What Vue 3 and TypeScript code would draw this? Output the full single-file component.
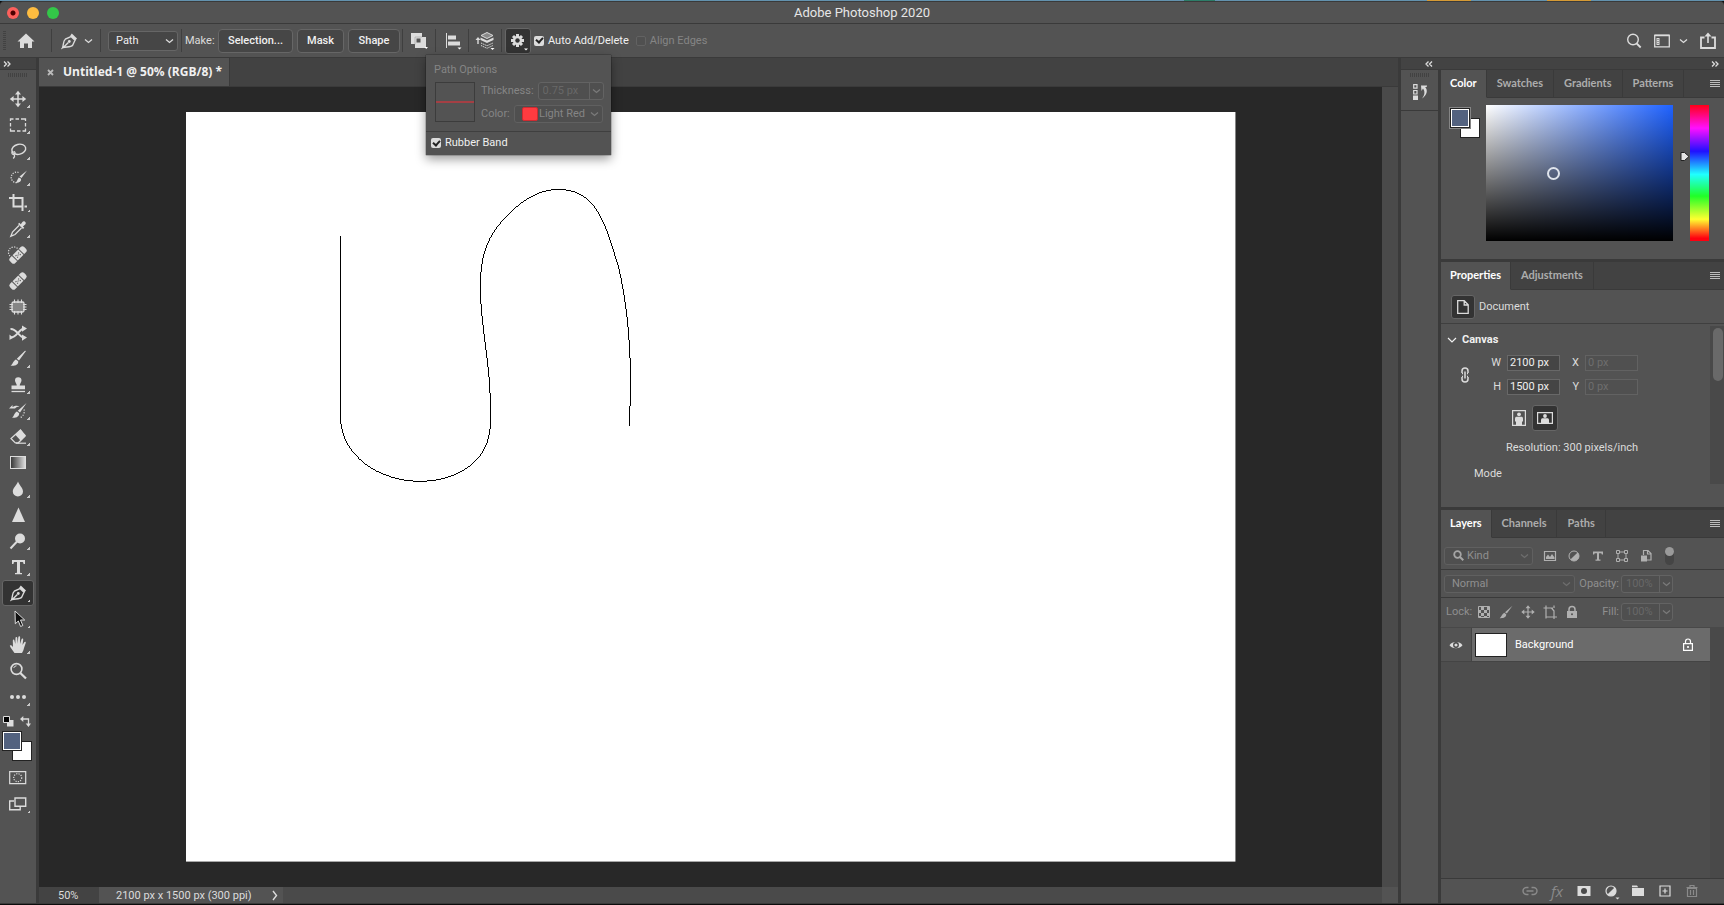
<script setup lang="ts">
import { ref } from 'vue'

interface Tool {
  name: string
  icon: string
  more: boolean
}

const tools: Tool[] = [
  { name: 'Move', more: true, icon: '<path d="M9 2v14M2 9h14" stroke="currentColor" stroke-width="1.5"/><path d="M9 .8 12 4.6H6zM9 17.2 12 13.400H6zM.8 9 4.600 6v6zM17.200 9 13.400 6v6z" fill="currentColor"/>' },
  { name: 'Marquee', more: true, icon: '<path d="M1.500 5V3h3M6.500 3h3.500M12 3h4.500v2M16.500 7v3.500M16.500 12.500V15h-3M11.500 15H8M6 15H1.500v-2.500M1.500 10.500V7" fill="none" stroke="currentColor" stroke-width="1.300"/>' },
  { name: 'Lasso', more: true, icon: '<ellipse cx="9.800" cy="7.300" rx="7" ry="5" transform="rotate(-14 9.800 7.300)" fill="none" stroke="currentColor" stroke-width="1.400"/><path d="M3.500 9.500c-1.500 1.500-.2 3.300 1.500 2.700 2-.6 1-2.700-.5-2.500M5 12.500c1.200 1.500.3 3-.8 4" fill="none" stroke="currentColor" stroke-width="1.200"/>' },
  { name: 'Quick Selection', more: true, icon: '<path d="M9.500 4.500A5.300 5.300 0 1 0 9 14.500" fill="none" stroke="currentColor" stroke-width="1.300" stroke-dasharray="1.200 1.300"/><path d="M18 2.500 12.500 10l-2-1.500zM12 10.800c.5 2.500-1.500 4.200-5.500 4 1.600-1 1.700-3 3.300-5.200z" fill="currentColor"/>' },
  { name: 'Crop', more: true, icon: '<path d="M4.500 0v12.500H14M0 4h13.500V17M15.500 12.500H18" fill="none" stroke="currentColor" stroke-width="2"/>' },
  { name: 'Eyedropper', more: true, icon: '<path d="M10 5.500 3.500 12l-1.700 4.200L6 14.500 12.500 8" fill="none" stroke="currentColor" stroke-width="1.300"/><path d="m9 4 1.300-1.200 1.500 1.400 1.600-2.300c1.700-1.800 4.600.8 2.800 2.700l-2.300 1.800 1.400 1.300L14 9z" fill="currentColor"/>' },
  { name: 'Spot Healing', more: false, icon: '<path d="M1 10a5 5 0 0 1 7.500-7.500" fill="none" stroke="currentColor" stroke-width="1.200" stroke-dasharray="1.200 1.300"/><g transform="rotate(-45 9 9)"><rect x="-1" y="5.300" width="20" height="7.400" rx="2.500" fill="currentColor"/><path d="M4.500 5v8M13.500 5v8" stroke="#535353" stroke-width="1"/><path d="M6.500 7.500h1.300v1H6.500zM10.200 7.500h1.300v1h-1.300zM8.400 8.600h1.200v1H8.400zM6.500 9.800h1.300v1H6.500zM10.200 9.800h1.300v1h-1.300z" fill="#535353"/></g>' },
  { name: 'Healing Brush', more: false, icon: '<g transform="rotate(-45 9 9)"><rect x="-1" y="5.300" width="20" height="7.400" rx="2.500" fill="currentColor"/><path d="M4.500 5v8M13.500 5v8" stroke="#535353" stroke-width="1"/><path d="M6.500 7.500h1.300v1H6.500zM10.200 7.500h1.300v1h-1.300zM8.400 8.600h1.200v1H8.400zM6.500 9.800h1.300v1H6.500zM10.200 9.800h1.300v1h-1.300z" fill="#535353"/></g>' },
  { name: 'Patch', more: false, icon: '<rect x="3" y="4" width="12" height="10" rx="1.500" fill="#858585" stroke="currentColor" stroke-width="1.300"/><path d="M5.500 1.500V5M9 1.500V5M12.500 1.500V5M5.500 13v3.500M9 13v3.500M12.500 13v3.500M.5 6.500H4M.5 9H4M.5 11.500H4M14 6.500h3.500M14 9h3.500M14 11.500h3.500" stroke="currentColor" stroke-width="1.100"/>' },
  { name: 'Content-Aware Move', more: false, icon: '<path d="M1.500 5C8 4.500 10 13.500 15 13.500M1.500 13.500C8 13.500 10 5 15 4.500" fill="none" stroke="currentColor" stroke-width="1.900"/><path d="m13 1.500 5 3-5 3.200zM13 10.500l5 3-5 3.200zM.5 10.500 4 13.800.5 16z" fill="currentColor"/>' },
  { name: 'Brush', more: true, icon: '<path d="m17 1-7 9.500-2.200-1.700L16 .8zM7 9.500l2.200 1.700c.5 3-2.500 5-7.700 4.600 2-1 2.500-5 5.500-6.300z" fill="currentColor"/>' },
  { name: 'Clone Stamp', more: true, icon: '<path d="M7.800 9.500c0-2-1.800-3-1.800-5a3.200 3.200 0 0 1 6.500 0c0 2-1.800 3-1.800 5H16v3.700H2.500V9.500z" fill="currentColor"/><path d="M2.500 15.500H16" stroke="currentColor" stroke-width="1.300"/>' },
  { name: 'History Brush', more: true, icon: '<path d="m17.500 1-6.500 9.500-2.200-1.700zM8 9.500l2.200 1.700c0 3-2.500 5-7.200 4.600 2-1 2-5 5-6.300z" fill="currentColor"/><path d="M0 6.500 3.500 3v2c3-1.500 5-1.500 7-.5-2 0-3.500.8-4.500 2z" fill="currentColor"/><path d="M15 7.500c1 3-.5 6.500-4 8.500" fill="none" stroke="currentColor" stroke-width="1.200" stroke-dasharray="1.200 1.500"/>' },
  { name: 'Eraser', more: true, icon: '<path d="m2 10.500 4.300 4.300h3L16 8.200 11.500 2z" fill="none" stroke="currentColor" stroke-width="1.200"/><path d="M11.500 1.500 17 7.500l-5.500 5-5.200-5.700z" fill="currentColor"/><path d="M7 15.200h10" stroke="currentColor" stroke-width="1.200"/>' },
  { name: 'Gradient', more: false, icon: '<defs><linearGradient id="tool-ramp"><stop offset="0" stop-color="#333"/><stop offset="1" stop-color="#e0e0e0"/></linearGradient></defs><rect x="1.500" y="2.500" width="15" height="12" fill="url(#tool-ramp)" stroke="currentColor"/>' },
  { name: 'Blur', more: true, icon: '<path d="M9 1.500c1.500 4 5 6.500 5 10a5 5 0 0 1-10.200 0c0-3.500 3.700-6 5.200-10z" fill="currentColor"/>' },
  { name: 'Sharpen', more: false, icon: '<path d="M9.500 1.500 16 16H3z" fill="currentColor"/>' },
  { name: 'Dodge', more: true, icon: '<circle cx="11" cy="6.500" r="5" fill="currentColor"/><path d="m8 9.500-6.500 7" stroke="currentColor" stroke-width="2"/>' },
  { name: 'Type', more: true, icon: '<path d="M3 2h13v4h-1.500c0-1.500-.5-2-1.500-2h-2v10.200c0 .8.800.8 2 .8v1.200H6V15c1.200 0 2 0 2-.8V4H6C5 4 4.500 4.500 4.500 6H3z" fill="currentColor"/>' },
  { name: 'Pen', more: true, icon: '<path d="m3.200 15.500-.7.400c1.200-3 .5-7 2.800-8.700L11 4.500l4 3.700-2.300 5c-1.700 2-5.700 1.500-9.500 2.300l5.200-5" fill="none" stroke="currentColor" stroke-width="1.400"/><circle cx="9.300" cy="9.500" r="1.400" fill="currentColor"/><path d="m10.200 3.800 1.600-2.300 5.200 5-1.700 2z" fill="currentColor"/>' },
  { name: 'Path Selection', more: true, icon: '<path d="m6 1 .3 12.800 3-2.800 2.300 5.500 2.200-1L11.500 10h4.200z" fill="#111" stroke="currentColor" stroke-width="1"/>' },
  { name: 'Hand', more: true, icon: '<path d="M5.500 17C4 14.500 1.500 11.800.8 9.700c.8-1 2-.5 3.200 1.500L3.800 4.700c0-1.500 1.500-1.500 1.700 0L6.300 8l.2-6c0-1.500 1.700-1.500 1.800 0l.2 5.800L9.300 1.300c.1-1.400 1.800-1.300 1.800 0L11 8l1.500-4.700c.4-1.300 1.900-1 1.700.4L13.500 9l1.700-2.700c.8-1.100 2-.5 1.500.8L15 12c-.5 2-1 3.500-2 5z" fill="currentColor"/>' },
  { name: 'Zoom', more: false, icon: '<circle cx="7.500" cy="7" r="5.400" fill="none" stroke="currentColor" stroke-width="1.600"/><path d="m11.300 11 5.700 5.500" stroke="currentColor" stroke-width="2.300"/><path d="M4.700 6A3 3 0 0 1 7.500 3.800" fill="none" stroke="currentColor"/>' },
  { name: 'More Tools', more: true, icon: '<g fill="currentColor"><circle cx="3" cy="9" r="2"/><circle cx="9" cy="9" r="2"/><circle cx="15" cy="9" r="2"/></g>' },
]

const activeTool = ref('Pen')
const pathMode = ref('Path')
const autoAdd = ref(true)
const alignEdges = ref(false)
const rubberBand = ref(true)
const thickness = ref('0.75 px')
const pathColor = ref('Light Red')
const canvasW = ref('2100 px')
const canvasH = ref('1500 px')
const canvasX = ref('0 px')
const canvasY = ref('0 px')
const opacity = ref('100%')
const fill = ref('100%')

const colorTabs = ['Color', 'Swatches', 'Gradients', 'Patterns']
const propertyTabs = ['Properties', 'Adjustments']
const layerTabs = ['Layers', 'Channels', 'Paths']

const filters = [
  { name: 'Pixel layers', icon: '<path d="M1.500 2.500h11v9h-11z" fill="none" stroke="currentColor" stroke-width="1.200"/><path d="M3 10V8l2-2.500L7 8l2-3 2.500 3.500V10z" fill="currentColor"/>' },
  { name: 'Adjustment layers', icon: '<circle cx="7" cy="7" r="5" fill="none" stroke="currentColor"/><path d="M10.600 3.400A5 5 0 0 1 3.400 10.600z" fill="currentColor"/>' },
  { name: 'Type layers', icon: '<path d="M2 2.500h10v3h-1.200c0-1-.5-1.300-1.300-1.300H8v6.300h1.500v1.200h-5v-1.200H6V4.200H4.500c-.8 0-1.300.3-1.300 1.300H2z" fill="currentColor"/>' },
  { name: 'Shape layers', icon: '<path d="M3 3h8v8H3z" fill="none" stroke="currentColor"/><path d="M1.500 1.500h3v3h-3zM9.500 1.500h3v3h-3zM1.500 9.500h3v3h-3zM9.500 9.500h3v3h-3z" fill="#535353" stroke="currentColor"/>' },
  { name: 'Smart objects', icon: '<path d="M4.500 6V1.500H9L12 4.500V11H8M8.500 1.500V5H12" fill="none" stroke="currentColor" stroke-width="1.200"/><path d="M2 6.500h6v6H2z" fill="currentColor"/>' },
]

const locks = [
  { name: 'Lock transparent pixels', icon: '<path d="M1.500 1.500h11v11h-11z" fill="none" stroke="currentColor"/><path d="M4 2h3v3H4zM10 2h2v3h-2zM2 5h2v3H2zM7 5h3v3H7zM4 8h3v3H4zM10 8h2v3h-2zM2 11h2v1H2zM7 11h3v1H7z" fill="currentColor"/>' },
  { name: 'Lock image pixels', icon: '<path d="M13.500.8 7.800 8.500 6 7.200zM5.300 7.800l1.900 1.500c.3 2.500-2 4.200-6.500 3.900 1.800-1 2.100-4.300 4.600-5.400z" fill="currentColor"/>' },
  { name: 'Lock position', icon: '<path d="M7 2v10M2 7h10" stroke="currentColor" stroke-width="1.200"/><path d="M7 .3 9.500 3.300h-5zM7 13.700 9.500 10.700h-5zM.3 7 3.300 4.500v5zM13.700 7 10.700 4.500v5z" fill="currentColor"/>' },
  { name: 'Lock artboard nesting', icon: '<path d="M3 .5v13M.5 3h3M11 .5V3M3 3h7M3 12h11M11 5.500V14M8.500 3 11 6" fill="none" stroke="currentColor" stroke-width="1.200"/>' },
  { name: 'Lock all', icon: '<path d="M2 6h10v7H2z" fill="currentColor"/><path d="M4 6.500V4.500a3 3 0 0 1 6 0v2" fill="none" stroke="currentColor" stroke-width="1.500"/><circle cx="7" cy="9.300" r="1" fill="#535353"/>' },
]

const layerActions = [
  { name: 'Link layers', dim: true, icon: '<path d="M7.500 5.500H5.500a3.500 3.500 0 0 0 0 7h2M10.500 5.500h2a3.500 3.500 0 0 1 0 7h-2M5.500 9h7" fill="none" stroke="currentColor" stroke-width="1.400"/>' },
  { name: 'Layer style', dim: true, icon: '' },
  { name: 'Add mask', dim: false, icon: '<path d="M2.500 4h13v10h-13z" fill="currentColor"/><circle cx="9" cy="9" r="3" fill="#4a4a4a"/>' },
  { name: 'New adjustment layer', dim: false, icon: '<circle cx="9" cy="9" r="5" fill="none" stroke="currentColor" stroke-width="1.200"/><path d="M12.600 5.400A5 5 0 0 1 5.400 12.600z" fill="currentColor"/><path d="M13.500 15.500h4l-2 2z" fill="currentColor"/>' },
  { name: 'New group', dim: false, icon: '<path d="M3 3.500h5l1.200 1.700H3zM3 6h12v8H3z" fill="currentColor"/>' },
  { name: 'New layer', dim: false, icon: '<path d="M4 4h10v10H4zM9 6.500v5M6.500 9h5" fill="none" stroke="currentColor" stroke-width="1.200"/>' },
  { name: 'Delete layer', dim: true, icon: '<path d="M4.500 6.500h9v8h-9zM3.500 5.500h11M7 5V3.500h4V5M7.500 8v5M10.500 8v5" fill="none" stroke="currentColor" stroke-width="1.200"/>' },
]
</script>

<template>
  <div class="window">
    <div class="desktop"></div>
    <header class="titlebar">
      <div class="lights">
        <button class="light red" aria-label="Close"></button>
        <button class="light amber" aria-label="Minimise"></button>
        <button class="light green" aria-label="Zoom"></button>
      </div>
      <h1>Adobe Photoshop 2020</h1>
    </header>

    <div class="options">
      <span class="grip-v"></span>
      <button class="bare home" aria-label="Home">
        <svg width="18" height="18" viewBox="0 0 18 18"><path d="M9 1.500 17.500 9.500H15V16h-4v-4.500H7V16H3V9.500H.5z" fill="currentColor" /></svg>
      </button>
      <span class="sep"></span>
      <button class="bare pen" aria-label="Pen presets">
        <svg width="18" height="18" viewBox="0 0 18 18" v-html="tools[19].icon"></svg>
        <svg class="chev" width="9" height="6" viewBox="0 0 9 6"><path d="M1 1.500 4.500 4.500 8 1.500" /></svg>
      </button>
      <span class="sep"></span>
      <span class="drop mode">
        <select v-model="pathMode" aria-label="Tool mode"><option>Path</option></select>
        <svg class="chev" width="9" height="6" viewBox="0 0 9 6"><path d="M1 1.500 4.500 4.500 8 1.500" /></svg>
      </span>
      <span class="sep"></span>
      <span class="make">Make:</span>
      <div class="makes">
        <button class="push w1">Selection...</button>
        <button class="push w2">Mask</button>
        <button class="push w3">Shape</button>
      </div>
      <span class="sep"></span>
      <button class="bare op" aria-label="Path operations">
        <svg width="20" height="18" viewBox="0 0 20 18"><path d="M2 1h11v4h4v11H6v-4H2z" fill="currentColor" /><path d="M7.500 6.500h4v4h-4z" fill="#535353" /><path d="M6 12.500V5h7" fill="none" stroke="#a0a0a0" stroke-width=".6" /><path d="M15.500 15h3.500l-1.700 2z" fill="#fff" /></svg>
      </button>
      <span class="sep"></span>
      <button class="bare op" aria-label="Path alignment">
        <svg width="20" height="18" viewBox="0 0 20 18"><path d="M4.500 1v15" stroke="currentColor" /><path d="M6 3.500h8v4H6zM6 9.500h12v4H6z" fill="currentColor" /><path d="M15.500 15.500h4l-2 2z" fill="#fff" /></svg>
      </button>
      <span class="sep"></span>
      <button class="bare op" aria-label="Path arrangement">
        <svg width="20" height="18" viewBox="0 0 20 18"><path d="M3 12V7" stroke="currentColor" stroke-width="1.400" /><path d="M3 5 5.500 8H.5z" fill="currentColor" /><path d="m12 .5 6 3-6 3-6-3z" fill="#8a8a8a" stroke="currentColor" /><path d="m5.500 5.500 6.500 3 6.500-3v2.500L12 11 5.500 8z" fill="currentColor" /><path d="m6 11 6 2.800 6-2.800M6 13.500l6 2.800 6-2.800" fill="none" stroke="currentColor" stroke-dasharray="1.500 .8" /><path d="M15.500 16h4l-2 2z" fill="#fff" /></svg>
      </button>
      <span class="sep"></span>
      <div class="gear-wrap">
        <button class="gear" aria-label="Path options">
          <svg width="22" height="22" viewBox="0 0 22 22"><g stroke="currentColor" stroke-width="3"><path d="M10.500 4v13M4 10.500h13M6 6l9 9M15 6l-9 9" /></g><circle cx="10.500" cy="10.500" r="4.600" fill="currentColor" /><circle cx="10.500" cy="10.500" r="2.200" fill="#333" /><path d="M17 18.500h4l-2 2z" fill="#fff" /></svg>
        </button>
        <section class="popover" aria-label="Path Options">
          <div class="pop-main">
            <h2>Path Options</h2>
            <div class="pop-grid">
              <div class="sample"><span></span></div>
              <div class="pop-fields">
                <div class="pop-row">
                  <label for="thick">Thickness:</label>
                  <span class="combo"><input id="thick" v-model="thickness" disabled /><button disabled aria-label="Thickness presets"><svg class="chev" width="9" height="6" viewBox="0 0 9 6"><path d="M1 1.500 4.500 4.500 8 1.500" /></svg></button></span>
                </div>
                <div class="pop-row">
                  <label for="pcolor">Color:</label>
                  <span class="drop pcolor">
                    <i class="chip"></i>
                    <select id="pcolor" v-model="pathColor" disabled><option>Light Red</option></select>
                    <svg class="chev" width="9" height="6" viewBox="0 0 9 6"><path d="M1 1.500 4.500 4.500 8 1.500" /></svg>
                  </span>
                </div>
              </div>
            </div>
          </div>
          <label class="check rubber"><input v-model="rubberBand" type="checkbox" />Rubber Band</label>
        </section>
      </div>
      <label class="check"><input v-model="autoAdd" type="checkbox" />Auto Add/Delete</label>
      <label class="check off"><input v-model="alignEdges" type="checkbox" disabled />Align Edges</label>
      <div class="right-tools">
        <button class="bare" aria-label="Search"><svg width="16" height="16" viewBox="0 0 16 16"><circle cx="7" cy="6.500" r="5.300" fill="none" stroke="currentColor" stroke-width="1.400" /><path d="m10.700 10.500 4 4" stroke="currentColor" stroke-width="1.800" /></svg></button>
        <button class="bare work" aria-label="Workspace">
          <svg width="16" height="14" viewBox="0 0 16 14"><path d="M.7 1.500h14.600v11.300H.7z" fill="none" stroke="currentColor" stroke-width="1.300" /><path d="M.5.500h15v1.500H.5zM2.500 4h3v7h-3z" fill="currentColor" /><path d="M3.500 5h1v1h-1zM3.500 7h1v1h-1zM3.500 9h1v1h-1z" fill="#535353" /></svg>
          <svg class="chev" width="9" height="6" viewBox="0 0 9 6"><path d="M1 1.500 4.500 4.500 8 1.500" /></svg>
        </button>
        <button class="bare" aria-label="Share"><svg width="16" height="18" viewBox="0 0 16 18"><path d="M4.500 5.500H1V16h14V5.500h-3.500" fill="none" stroke="currentColor" stroke-width="1.800" /><path d="M8 11V3" stroke="currentColor" stroke-width="1.600" /><path d="m8 .5 3.500 4h-7z" fill="currentColor" /></svg></button>
      </div>
    </div>

    <div class="workspace">
      <aside class="toolbox">
        <button class="collapse left" aria-label="Expand tools"><svg width="8" height="6" viewBox="0 0 8 6"><path d="M1 .5 3.500 3 1 5.500M4.500.5 7 3 4.500 5.500" /></svg></button>
        <div class="tool-body">
          <span class="grip-h"></span>
          <button v-for="t in tools" :key="t.name" class="tool" :class="{ active: t.name === activeTool }" :aria-label="t.name" @click="activeTool = t.name">
            <svg width="18" height="18" viewBox="0 0 18 18" v-html="t.icon"></svg>
            <i v-if="t.more" class="corner"></i>
          </button>
          <div class="mini">
            <button class="bare" aria-label="Default colors"><svg width="11" height="11" viewBox="0 0 11 11"><path d="M4 4h6.500v6.500H4z" fill="#ddd" /><path d="M.5.5h6v6h-6z" fill="#000" stroke="#ddd" /></svg></button>
            <button class="bare" aria-label="Swap colors"><svg width="11" height="11" viewBox="0 0 11 11"><path d="M3 3h5.500v5.500" fill="none" stroke="currentColor" stroke-width="1.300" /><path d="M3.300 0v6L0 3zM5.700 7.500h5.300L8.500 11z" fill="currentColor" /></svg></button>
          </div>
          <div class="pair"><i class="bg"></i><i class="fg"></i></div>
          <button class="tool" aria-label="Quick mask"><svg width="18" height="18" viewBox="0 0 18 18"><path d="M.7 2.700h16v12H.7z" fill="none" stroke="currentColor" stroke-width="1.200" /><circle cx="8.700" cy="8.700" r="4" fill="none" stroke="currentColor" stroke-width="1.200" stroke-dasharray="1.200 1.200" /></svg></button>
          <button class="tool" aria-label="Screen mode"><svg width="18" height="18" viewBox="0 0 18 18"><path d="M5 6H.7v8.800h10.500V11" fill="none" stroke="currentColor" stroke-width="1.400" /><path d="M6 3h10.700v8.300H6z" fill="none" stroke="currentColor" stroke-width="1.400" /></svg><i class="corner"></i></button>
        </div>
      </aside>

      <main class="document">
        <div class="doc-tabs">
          <div class="doc-tab">
            <button class="bare" aria-label="Close document"><svg width="7" height="7" viewBox="0 0 7 7"><path d="m1 1 5 5M6 1 1 6" stroke="#bbb" stroke-width="1.800" /></svg></button>
            <span>Untitled-1 @ 50% (RGB/8) *</span>
          </div>
        </div>
        <div class="stage">
          <div class="stage-view">
            <svg class="artboard" viewBox="0 0 1050 750">
              <rect width="1050" height="750" fill="#fff" />
              <path class="stroke" d="M154.500 124V308C157 344 192 369.500 234.500 369.500C268 369.500 304.500 352 304.500 311V294C304.500 250 294.500 213 294.500 175.500C294.500 145 301 126 316.500 109C334 89 353 77.500 372.500 77.500C391 77.500 403 85 412 100C416 107 419 113 421.500 120L432 152C441 188 446 238 444.500 288L443.500 314" />
            </svg>
          </div>
          <div class="track"></div>
        </div>
        <footer class="status">
          <span class="zoom">50%</span>
          <button class="dims">2100 px x 1500 px (300 ppi)<svg width="6" height="11" viewBox="0 0 6 11"><path d="M1 1 4.500 5.500 1 10" fill="none" stroke="currentColor" stroke-width="1.400" /></svg></button>
          <span class="status-end"></span>
        </footer>
      </main>

      <div class="dock">
        <div class="dock-head">
          <button class="collapse" aria-label="Expand dock"><svg width="8" height="6" viewBox="0 0 8 6"><path d="M3.500.5 1 3l2.500 2.500M7 .5 4.500 3 7 5.500" /></svg></button>
          <button class="collapse" aria-label="Collapse panels"><svg width="8" height="6" viewBox="0 0 8 6"><path d="M1 .5 3.500 3 1 5.500M4.500.5 7 3 4.500 5.500" /></svg></button>
        </div>
        <div class="dock-body">
          <div class="strip">
            <div class="strip-top">
              <span class="grip-h"></span>
              <button class="bare" aria-label="History"><svg width="16" height="18" viewBox="0 0 16 18"><path d="M1.700 1.700H5v3.500H1.700zM1.700 7.500H5V11H1.700z" fill="none" stroke="currentColor" stroke-width="1.200" /><path d="M1 12.500h5V17H1z" fill="currentColor" /><path d="M9 2.500h6v1.200c-1 0-1.500.2-1.700.6 2.800 3 1.700 8-3.300 11.200 2.700-3.300 3.300-7 1-10L9.500 8z" fill="currentColor" /></svg></button>
            </div>
          </div>

          <div class="panels">
            <section class="panel color">
              <div class="tabs">
                <button v-for="(t, i) in colorTabs" :key="t" class="tab" :class="{ on: i === 0 }">{{ t }}</button>
                <button class="menu" aria-label="Color panel menu"><i></i></button>
              </div>
              <div class="color-body">
                <div class="pair framed"><i class="bg"></i><i class="fg"></i></div>
                <div class="field"><i class="ring"></i></div>
                <div class="hue"><svg class="pointer" width="10" height="11" viewBox="0 0 10 11"><path d="M1 1.500h3.500L9 5.500 4.500 9.500H1z" fill="#e6e6e6" stroke="#222" /></svg></div>
              </div>
            </section>

            <section class="panel props">
              <div class="tabs">
                <button v-for="(t, i) in propertyTabs" :key="t" class="tab" :class="{ on: i === 0 }">{{ t }}</button>
                <button class="menu" aria-label="Properties panel menu"><i></i></button>
              </div>
              <div class="doc-row">
                <span class="doc-icon"><svg width="12" height="14" viewBox="0 0 12 14"><path d="M.7.700h6.500l4 4v8.600H.7zM7.200 1v4h4" fill="none" stroke="currentColor" stroke-width="1.300" /></svg></span>
                Document
              </div>
              <div class="props-scroll">
                <div class="props-main">
                  <button class="section"><svg width="10" height="6" viewBox="0 0 10 6"><path d="m1 1 4 4 4-4" fill="none" stroke="currentColor" stroke-width="1.200" /></svg>Canvas</button>
                  <div class="size">
                    <svg class="chain" width="10" height="16" viewBox="0 0 10 16"><path d="M2 6V4a3 3 0 0 1 6 0v2M2 10v2a3 3 0 0 0 6 0v-2M5 4.500v7M2 6.500h1M7 6.500h1M2 9.500h1M7 9.500h1" fill="none" stroke="currentColor" stroke-width="1.500" /></svg>
                    <div class="size-grid">
                      <label for="cw">W</label><input id="cw" v-model="canvasW" />
                      <label for="cx">X</label><input id="cx" v-model="canvasX" disabled />
                      <label for="ch">H</label><input id="ch" v-model="canvasH" />
                      <label for="cy">Y</label><input id="cy" v-model="canvasY" disabled />
                    </div>
                  </div>
                  <div class="orient">
                    <button class="bare" aria-label="Portrait"><svg width="14" height="16" viewBox="0 0 14 16"><path d="M.6.600h12.800v14.800H.6z" fill="none" stroke="currentColor" stroke-width="1.200" /><circle cx="7" cy="4.300" r="1.900" fill="currentColor" /><path d="M3 8.500C3 7 4 6.700 5 6.700h4c1 0 2 .3 2 1.800V11l-1 1v3H4v-3l-1-1z" fill="currentColor" /></svg></button>
                    <button class="land" aria-label="Landscape"><svg width="16" height="12" viewBox="0 0 16 12"><path d="M.6.600h14.800v10.800H.6z" fill="none" stroke="currentColor" stroke-width="1.200" /><circle cx="8" cy="4" r="1.900" fill="currentColor" /><path d="M4 11V8c0-1.300 1-1.700 2-1.700h4c1 0 2 .4 2 1.700v3z" fill="currentColor" /></svg></button>
                  </div>
                  <p class="res">Resolution: 300 pixels/inch</p>
                  <p class="mode-label">Mode</p>
                </div>
                <div class="bar"><i></i></div>
              </div>
            </section>

            <section class="panel layers">
              <div class="tabs">
                <button v-for="(t, i) in layerTabs" :key="t" class="tab" :class="{ on: i === 0 }">{{ t }}</button>
                <button class="menu" aria-label="Layers panel menu"><i></i></button>
              </div>
              <div class="lrow filter">
                <span class="drop kind">
                  <svg class="glass" width="11" height="11" viewBox="0 0 11 11"><circle cx="4.500" cy="4.500" r="3.300" fill="none" stroke="currentColor" stroke-width="1.800" /><path d="m7 7 3.300 3.300" stroke="currentColor" stroke-width="2" /></svg>
                  <select aria-label="Filter kind" disabled><option>Kind</option></select>
                  <svg class="chev" width="9" height="6" viewBox="0 0 9 6"><path d="M1 1.500 4.500 4.500 8 1.500" /></svg>
                </span>
                <div class="icons wide">
                  <button v-for="f in filters" :key="f.name" class="bare" :aria-label="f.name"><svg width="14" height="14" viewBox="0 0 14 14" v-html="f.icon"></svg></button>
                </div>
                <button class="toggle" aria-label="Layer filtering"><i></i></button>
              </div>
              <div class="lrow">
                <span class="drop blend">
                  <select aria-label="Blend mode" disabled><option>Normal</option></select>
                  <svg class="chev" width="9" height="6" viewBox="0 0 9 6"><path d="M1 1.500 4.500 4.500 8 1.500" /></svg>
                </span>
                <label for="op" class="amount">Opacity:</label>
                <span class="combo"><input id="op" v-model="opacity" disabled /><button disabled aria-label="Opacity slider"><svg class="chev" width="9" height="6" viewBox="0 0 9 6"><path d="M1 1.500 4.500 4.500 8 1.500" /></svg></button></span>
              </div>
              <div class="lrow lock-row">
                <span class="lock-label">Lock:</span>
                <div class="icons">
                  <button v-for="l in locks" :key="l.name" class="bare" :aria-label="l.name"><svg width="14" height="14" viewBox="0 0 14 14" v-html="l.icon"></svg></button>
                </div>
                <label for="fl" class="amount">Fill:</label>
                <span class="combo"><input id="fl" v-model="fill" disabled /><button disabled aria-label="Fill slider"><svg class="chev" width="9" height="6" viewBox="0 0 9 6"><path d="M1 1.500 4.500 4.500 8 1.500" /></svg></button></span>
              </div>
              <div class="list">
                <div class="list-main">
                  <div class="layer">
                    <button class="eye" aria-label="Layer visibility"><svg width="14" height="10" viewBox="0 0 14 10"><path d="M.5 5.200C3 1 11 1 13.500 5.200 11 9.200 3 9.200.5 5.200z" fill="currentColor" /><circle cx="7" cy="5" r="2.900" fill="#444" /><circle cx="7" cy="5" r="1.600" fill="currentColor" /></svg></button>
                    <div class="layer-main">
                      <i class="thumb"></i>
                      <span>Background</span>
                      <svg width="12" height="13" viewBox="0 0 12 13"><path d="M1.600 5.600h8.800v6.800H1.600zM3.500 5.500V3.500a2.500 2.500 0 0 1 5 0v2" fill="none" stroke="currentColor" stroke-width="1.200" /><circle cx="6" cy="9" r="1.100" fill="currentColor" /></svg>
                    </div>
                  </div>
                </div>
                <div class="list-track"></div>
              </div>
              <footer class="actions">
                <button v-for="a in layerActions" :key="a.name" class="bare" :class="{ dim: a.dim }" :aria-label="a.name">
                  <svg v-if="a.icon" width="18" height="18" viewBox="0 0 18 18" v-html="a.icon"></svg>
                  <span v-else class="fx">fx</span>
                </button>
              </footer>
            </section>
          </div>
        </div>
      </div>
    </div>
  </div>
</template>

<style>
body { margin: 0; background: #000; }
</style>

<style scoped>
* { box-sizing: border-box; }
.window { display: flex; flex-direction: column; height: 100vh; padding-bottom: 1px; background: #0c0c0c; color: #dcdcdc; font: 11px/16px Roboto, "Liberation Sans", sans-serif; overflow: hidden; }
button, input, select { font: inherit; color: inherit; margin: 0; padding: 0; border: 0; border-radius: 0; background: none; }
svg { display: block; flex: none; overflow: visible; }
i { display: block; }
h1, h2, p { margin: 0; font-weight: 400; }
.bare { display: flex; align-items: center; justify-content: center; }
.chev path { fill: none; stroke: currentColor; stroke-width: 1.300; }

.desktop { flex: none; height: 1px; background: linear-gradient(90deg, transparent 1184px, #2d7d68 1184px 1215px, transparent 1215px 1427px, #d59a35 1427px 1471px, transparent 1471px 1547px, #d59a35 1547px 1591px, transparent 1591px), #6392ae; }
.titlebar { flex: none; display: grid; grid-template-columns: 1fr auto 1fr; align-items: center; height: 23px; background: #535353; border-top: 1px solid #3a3a3a; border-bottom: 1px solid #3a3a3a; border-radius: 4px 4px 0 0; }
.titlebar h1 { padding-top: 1px; font-size: 13px; line-height: 20px; color: #e6e6e6; }
.lights { display: flex; gap: 8px; padding-left: 7px; }
.light { width: 12px; height: 12px; border-radius: 50%; }
.red { background: radial-gradient(circle, #4d0000 2px, #fc605c 3px); }
.amber { background: #fdbc40; }
.green { background: #33c748; }

.options { flex: none; display: flex; align-items: center; height: 34px; padding: 0 8px 0 3px; background: #535353; border-bottom: 1px solid #3a3a3a; }
.grip-v { width: 3px; height: 20px; background: repeating-linear-gradient(#424242 0 1px, transparent 1px 2px); }
.home { width: 18px; margin: 0 16px 0 11px; }
.sep { flex: none; width: 1px; height: 23px; background: #3f3f3f; }
.pen { gap: 6px; margin: 0 7px 0 8px; }
.drop { position: relative; display: flex; align-items: center; border: 1px solid #666; border-radius: 3px; background: #464646; }
.drop select { flex: 1; width: 100%; appearance: none; opacity: 1; }
.drop > .chev { position: absolute; right: 3px; pointer-events: none; }
.mode { width: 70px; height: 20px; margin: 0 3px 0 7px; }
.mode select { padding-left: 7px; color: #f0f0f0; }
.make { width: 36px; padding-left: 3px; }
.makes { display: flex; gap: 4px; margin-right: 2px; }
.push { height: 24px; border: 1px solid #666; border-radius: 4px; background: #464646; color: #f0f0f0; font-weight: 500; }
.w1 { width: 75px; }
.w2 { width: 47px; }
.w3 { width: 52px; }
.op { width: 32px; }
.gear-wrap { position: relative; margin: 0 3px; }
.gear { display: flex; align-items: center; justify-content: center; width: 26px; height: 26px; border: 1px solid #666; border-radius: 3px; background: #333; }
.check { display: flex; align-items: center; gap: 4px; margin-right: 7px; color: #f0f0f0; white-space: nowrap; }
.check input { appearance: none; display: flex; align-items: center; justify-content: center; width: 10px; height: 10px; border-radius: 2px; background: #dcdcdc; }
.check input:checked::after { content: ""; width: 3px; height: 5px; margin-bottom: 2px; border: solid #222; border-width: 0 2px 2px 0; transform: rotate(42deg); }
.check.off { color: #858585; }
.check.off input { border: 1px solid #626262; background: #505050; }
.right-tools { display: flex; align-items: center; gap: 12px; margin-left: auto; }
.work { gap: 9px; }

.popover { position: absolute; z-index: 5; top: 27px; left: -79px; width: 185px; height: 100px; background: #535353; box-shadow: 0 4px 10px rgba(0, 0, 0, .4), 0 0 1px #000; color: #858585; }
.pop-main { height: 77px; padding: 7px 8px 0; border-bottom: 1px solid #3f3f3f; }
.pop-main h2 { font-size: 11px; line-height: 16px; }
.pop-grid { display: flex; justify-content: space-between; margin-top: 4px; }
.sample { display: flex; align-items: center; width: 40px; height: 40px; margin-left: 1px; border: 1px solid #3c3c3c; }
.sample span { width: 100%; height: 2px; background: #a43f44; }
.pop-fields { display: flex; flex-direction: column; gap: 5px; }
.pop-row { display: flex; align-items: center; justify-content: space-between; gap: 4px; width: 122px; }
.combo { display: flex; height: 18px; border: 1px solid #636363; border-radius: 3px; background: #4f4f4f; color: #686868; }
.combo input { width: 37px; padding-left: 4px; }
.combo button { display: flex; align-items: center; justify-content: center; width: 14px; border-left: 1px solid #636363; color: #7a7a7a; }
.pop-row .combo { width: 66px; }
.pop-row .combo input { width: 50px; }
.pcolor { width: 89px; height: 18px; border-color: #606060; background: #4f4f4f; }
.chip { flex: none; width: 16px; height: 14px; margin-left: 7px; border: 1px solid #d02a30; border-radius: 2px; background: #ff3b40; }
.pcolor select { width: 60px; padding-left: 1px; color: #858585; }
.pcolor > .chev { color: #7a7a7a; }
.rubber { height: 23px; padding-left: 5px; }

.workspace { flex: 1; display: flex; min-height: 0; background: #3a3a3a; border-bottom: 1px solid #3a3a3a; }
.toolbox { flex: none; display: flex; flex-direction: column; width: 36px; }
.collapse { display: flex; align-items: center; height: 11px; color: #dcdcdc; }
.collapse path { fill: none; stroke: currentColor; stroke-width: 1.300; }
.collapse.left { flex: none; padding-left: 3px; background: #434343; }
.tool-body { flex: 1; display: flex; flex-direction: column; margin-top: 1px; padding-left: 2px; background: #535353; }
.grip-h { width: 20px; height: 4px; background: repeating-linear-gradient(90deg, #424242 0 1px, transparent 1px 2px); }
.tool-body .grip-h { flex: none; margin: 3px 0 9px 6px; }
.tool { flex: none; position: relative; display: flex; align-items: center; justify-content: center; width: 32px; height: 26px; border: 1px solid transparent; border-radius: 3px; }
.tool.active { border-color: #666; background: #333; }
.corner { position: absolute; right: 3px; bottom: 3px; width: 3px; height: 3px; background: linear-gradient(135deg, transparent 50%, #c8c8c8 50%); }
.mini { display: flex; gap: 6px; margin: 6px 0 4px 1px; }
.pair { position: relative; flex: none; width: 30px; height: 30px; }
.pair i { position: absolute; width: 20px; height: 20px; border: 1px solid #222; }
.pair .bg { right: 0; bottom: 0; background: #fff; }
.pair .fg { left: 0; top: 0; background: #53627f; box-shadow: inset 0 0 0 1px #fff; }
.tool-body > .pair { margin-bottom: 4px; }

.document { flex: 1; display: flex; flex-direction: column; min-width: 0; margin: 0 3px; }
.doc-tabs { flex: none; display: flex; height: 28px; background: #424242; }
.doc-tab { display: flex; align-items: center; gap: 9px; width: 191px; padding-left: 8px; background: #535353; border-right: 1px solid #3a3a3a; color: #f0f0f0; font: 700 12px/18px "Open Sans", sans-serif; white-space: nowrap; }
.stage { flex: 1; display: flex; min-height: 0; margin-top: 1px; }
.stage-view { flex: 1; display: flex; align-items: center; justify-content: center; min-width: 0; padding-left: 1px; background: #282828; }
.artboard { width: 78.200%; max-height: 94%; }
.stroke { fill: none; stroke: #000; stroke-width: 1; shape-rendering: crispEdges; }
.track { flex: none; width: 16px; background: #4a4a4a; }
.status { flex: none; display: flex; height: 16px; background: #4a4a4a; }
.zoom { width: 60px; padding: 1px 0 0 19px; background: #434343; }
.dims { display: flex; align-items: center; justify-content: space-between; width: 184px; padding: 1px 5px 0 17px; background: #535353; white-space: nowrap; }
.status-end { width: 16px; margin-left: auto; background: #535353; }

.dock { flex: none; display: flex; flex-direction: column; width: 323px; }
.dock-head { flex: none; display: flex; justify-content: space-between; padding: 0 5px 0 24px; background: #434343; }
.dock-body { flex: 1; display: flex; gap: 3px; min-height: 0; margin-top: 1px; }
.strip { width: 37px; background: #535353; }
.strip-top { display: flex; flex-direction: column; align-items: center; gap: 6px; height: 41px; padding-top: 3px; border-bottom: 1px solid #3a3a3a; }
.panels { flex: 1; display: flex; flex-direction: column; gap: 3px; min-width: 0; }
.panel { flex: none; display: flex; flex-direction: column; background: #535353; }
.color { height: 189px; }
.props { height: 245px; }
.layers { flex: 1; min-height: 0; }
.tabs { flex: none; display: flex; height: 28px; background: #424242; }
.tab { padding: 0 9px 1px; border-right: 1px solid #3a3a3a; border-bottom: 1px solid #3a3a3a; color: #adadad; font: 700 11px/18px Lato, "Open Sans", sans-serif; }
.tab + .tab { padding: 0 10px 1px; }
.tab.on { border-bottom-color: #535353; background: #535353; color: #fff; }
.menu { flex: 1; display: flex; align-items: center; justify-content: flex-end; padding-right: 4px; border-bottom: 1px solid #3a3a3a; }
.menu i { width: 10px; height: 7px; background: repeating-linear-gradient(#bdbdbd 0 1px, transparent 1px 2px); }

.color-body { display: flex; height: 144px; padding: 7px 15px 0 9px; }
.framed { margin: 3px 6px 0 0; }
.framed .fg { outline: 1px solid #858585; }
.field { position: relative; flex: 1; height: 136px; background: linear-gradient(transparent, #000), linear-gradient(90deg, #fff, #1f62ff); }
.ring { position: absolute; left: 36%; top: 50%; width: 13px; height: 13px; margin: -6px; border: 2px solid #dfe4ec; border-radius: 50%; }
.hue { position: relative; width: 19px; height: 136px; margin-left: 17px; background: linear-gradient(#ff0018, #ff10ff 17%, #2010ff 34%, #20ffff 51%, #20ff28 67%, #ffff30 84%, #ff0010 98%); }
.pointer { position: absolute; left: -10px; top: 46px; }

.doc-row { flex: none; display: flex; align-items: center; gap: 4px; height: 34px; padding-left: 10px; border-bottom: 1px solid #3f3f3f; }
.doc-icon { display: flex; align-items: center; justify-content: center; width: 24px; height: 24px; border: 1px solid #666; border-radius: 3px; background: #333; }
.props-scroll { display: flex; height: 160px; }
.props-main { flex: 1; padding-left: 6px; }
.section { display: flex; align-items: center; gap: 5px; margin-top: 8px; color: #f0f0f0; font-weight: 700; }
.size { display: flex; align-items: center; gap: 17px; margin: 7px 0 0 13px; }
.size-grid { display: grid; grid-template-columns: 20px 53px 25px 53px; gap: 8px 0; }
.size-grid label { padding-right: 6px; text-align: right; }
.size-grid input { width: 53px; height: 16px; padding-left: 2px; border: 1px solid #686868; background: #454545; color: #f0f0f0; }
.size-grid input:disabled { border-color: #626262; background: #505050; color: #6e6e6e; }
.orient { display: flex; align-items: center; gap: 6px; margin: 10px 0 0 65px; }
.land { display: flex; align-items: center; justify-content: center; width: 26px; height: 26px; border: 1px solid #666; border-radius: 3px; background: #333; }
.res { margin: 9px 0 0 59px; }
.mode-label { margin: 10px 0 0 27px; }
.bar { width: 14px; margin-top: 2px; padding: 2px 1px 0 3px; background: #494949; }
.bar i { height: 53px; border-radius: 5px; background: #696969; }

.lrow { flex: none; display: flex; align-items: center; height: 28px; padding-left: 3px; border-bottom: 1px solid #3a3a3a; color: #8f8f8f; }
.lrow.filter { height: 32px; padding-top: 4px; }
.lrow .drop { height: 18px; border-color: #606060; background: #4f4f4f; }
.lrow .drop > .chev { color: #6e6e6e; }
.kind { width: 89px; }
.kind .glass { margin: 0 3px 0 8px; color: #a5a5a5; }
.blend { width: 131px; }
.blend select { padding-left: 7px; }
.icons { display: flex; gap: 8px; margin-left: 5px; color: #b0b0b0; }
.icons.wide { gap: 10px; margin-left: 10px; }
.toggle { display: flex; align-items: flex-start; width: 9px; height: 18px; margin-left: 12px; border-radius: 5px; background: #454545; }
.toggle i { width: 9px; height: 9px; border-radius: 50%; background: #9a9a9a; }
.amount { width: 46px; padding-right: 2px; text-align: right; }
.lock-row { border: 0; padding: 0 0 1px 5px; height: 29px; }
.lock-label { width: 26px; }
.lock-row .amount { margin-left: auto; }
.lock-row .combo { margin-right: 51px; }
.lrow .combo { width: 52px; }
.list { flex: 1; display: flex; min-height: 0; background: #4d4d4d; }
.list-main { flex: 1; }
.list-track { width: 14px; background: #494949; }
.layer { display: flex; height: 35px; border-top: 1px solid #484848; border-bottom: 1px solid #444; }
.eye { display: flex; align-items: center; justify-content: center; width: 31px; border-right: 1px solid #444; background: #535353; }
.layer-main { flex: 1; display: flex; align-items: center; gap: 8px; padding: 0 16px 0 3px; background: #6b6b6b; color: #fff; }
.layer-main svg { margin-left: auto; }
.thumb { width: 32px; height: 24px; border: 1px solid #222; background: #fff; }
.actions { flex: none; display: flex; align-items: center; justify-content: flex-end; gap: 9px; height: 25px; padding: 0 23px 1px 0; border-top: 1px solid #3a3a3a; }
.actions .bare { width: 18px; }
.dim { color: #8a8a8a; }
.fx { font: italic 15px/18px "Open Sans", sans-serif; }
</style>
